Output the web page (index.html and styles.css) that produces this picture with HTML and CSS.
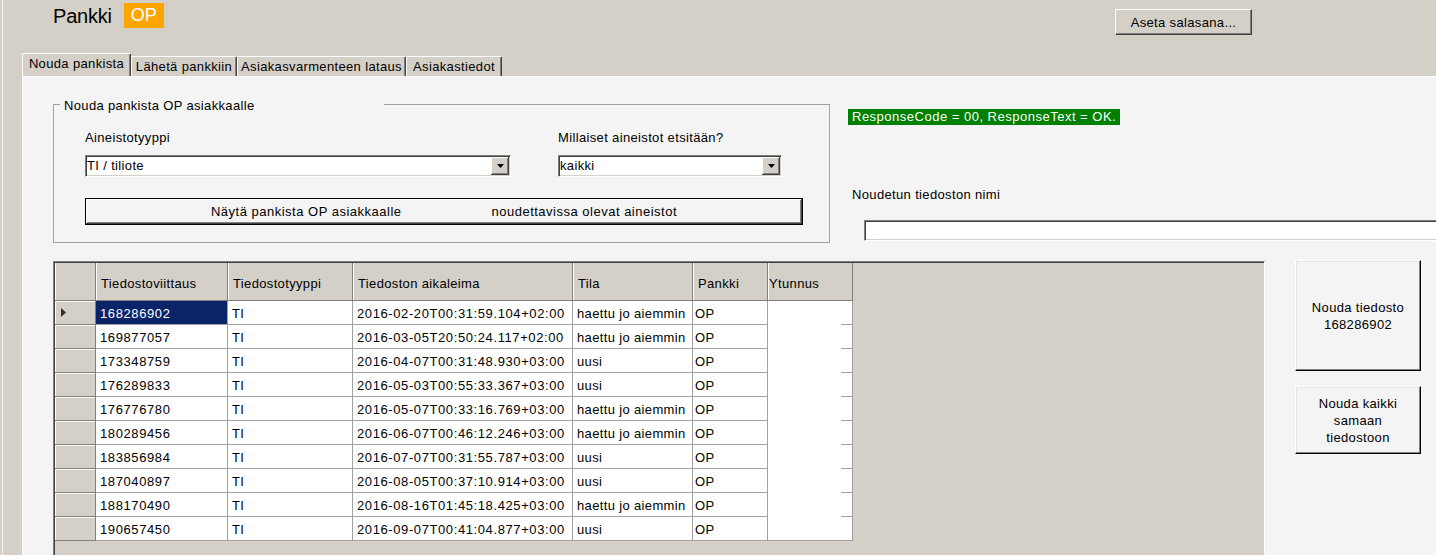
FILE: index.html
```html
<!DOCTYPE html>
<html lang="fi">
<head>
<meta charset="utf-8">
<title>Pankki OP</title>
<link rel="stylesheet" href="styles.css">
</head>
<body>
<div class="app">
  <header class="topbar">
    <h1 class="title">Pankki</h1>
    <span class="bank-badge">OP</span>
    <button class="btn3d pw-btn" type="button">Aseta salasana...</button>
  </header>

  <nav class="tabs">
    <div class="tab tab-active">Nouda pankista</div>
    <div class="tab">Lähetä pankkiin</div>
    <div class="tab">Asiakasvarmenteen lataus</div>
    <div class="tab">Asiakastiedot</div>
  </nav>

  <main class="panel">
    <div class="top-row">
      <section class="groupbox">
        <span class="groupbox-title">Nouda pankista OP asiakkaalle</span>
        <div class="field-row">
          <div class="field field-type">
            <span class="field-label">Aineistotyyppi</span>
            <div class="combo combo-type">
              <span class="combo-value">TI / tiliote</span>
              <span class="combo-drop"><svg width="7" height="4" viewBox="0 0 7 4"><path d="M0 0H7L3.5 4Z" fill="#000"/></svg></span>
            </div>
          </div>
          <div class="field field-filter">
            <span class="field-label">Millaiset aineistot etsitään?</span>
            <div class="combo combo-filter">
              <span class="combo-value">kaikki</span>
              <span class="combo-drop"><svg width="7" height="4" viewBox="0 0 7 4"><path d="M0 0H7L3.5 4Z" fill="#000"/></svg></span>
            </div>
          </div>
        </div>
        <button class="default-btn" type="button"><span>Näytä pankista OP asiakkaalle</span><span class="btn-part2">noudettavissa olevat aineistot</span></button>
      </section>

      <section class="status">
        <div class="response">ResponseCode = 00, ResponseText = OK.</div>
        <div class="file-label">Noudetun tiedoston nimi</div>
        <div class="file-input"></div>
      </section>
    </div>

    <div class="bottom-row">
      <div class="datagrid">
        <div class="gr gr-head">
          <div class="h"></div>
          <div class="h">Tiedostoviittaus</div>
          <div class="h">Tiedostotyyppi</div>
          <div class="h">Tiedoston aikaleima</div>
          <div class="h">Tila</div>
          <div class="h">Pankki</div>
          <div class="h h-y">Ytunnus</div>
        </div>
        <div class="gr">
          <div class="rh"><svg width="5" height="9" viewBox="0 0 5 9"><path d="M0 0L5 4.5L0 9Z" fill="#303030"/></svg></div>
          <div class="c num sel">168286902</div><div class="c">TI</div><div class="c num">2016-02-20T00:31:59.104+02:00</div><div class="c">haettu jo aiemmin</div><div class="c cp">OP</div><div class="c cy"></div>
        </div>
        <div class="gr">
          <div class="rh"></div>
          <div class="c num">169877057</div><div class="c">TI</div><div class="c num">2016-03-05T20:50:24.117+02:00</div><div class="c">haettu jo aiemmin</div><div class="c cp">OP</div><div class="c cy"></div>
        </div>
        <div class="gr">
          <div class="rh"></div>
          <div class="c num">173348759</div><div class="c">TI</div><div class="c num">2016-04-07T00:31:48.930+03:00</div><div class="c">uusi</div><div class="c cp">OP</div><div class="c cy"></div>
        </div>
        <div class="gr">
          <div class="rh"></div>
          <div class="c num">176289833</div><div class="c">TI</div><div class="c num">2016-05-03T00:55:33.367+03:00</div><div class="c">uusi</div><div class="c cp">OP</div><div class="c cy"></div>
        </div>
        <div class="gr">
          <div class="rh"></div>
          <div class="c num">176776780</div><div class="c">TI</div><div class="c num">2016-05-07T00:33:16.769+03:00</div><div class="c">haettu jo aiemmin</div><div class="c cp">OP</div><div class="c cy"></div>
        </div>
        <div class="gr">
          <div class="rh"></div>
          <div class="c num">180289456</div><div class="c">TI</div><div class="c num">2016-06-07T00:46:12.246+03:00</div><div class="c">haettu jo aiemmin</div><div class="c cp">OP</div><div class="c cy"></div>
        </div>
        <div class="gr">
          <div class="rh"></div>
          <div class="c num">183856984</div><div class="c">TI</div><div class="c num">2016-07-07T00:31:55.787+03:00</div><div class="c">uusi</div><div class="c cp">OP</div><div class="c cy"></div>
        </div>
        <div class="gr">
          <div class="rh"></div>
          <div class="c num">187040897</div><div class="c">TI</div><div class="c num">2016-08-05T00:37:10.914+03:00</div><div class="c">uusi</div><div class="c cp">OP</div><div class="c cy"></div>
        </div>
        <div class="gr">
          <div class="rh"></div>
          <div class="c num">188170490</div><div class="c">TI</div><div class="c num">2016-08-16T01:45:18.425+03:00</div><div class="c">haettu jo aiemmin</div><div class="c cp">OP</div><div class="c cy"></div>
        </div>
        <div class="gr gr-last">
          <div class="rh"></div>
          <div class="c num">190657450</div><div class="c">TI</div><div class="c num">2016-09-07T00:41:04.877+03:00</div><div class="c">uusi</div><div class="c cp">OP</div><div class="c cy"></div>
        </div>
      </div>

      <div class="actions">
        <button class="action-btn action-tall" type="button">Nouda tiedosto<br>168286902</button>
        <button class="action-btn action-short" type="button">Nouda kaikki<br>samaan<br>tiedostoon</button>
      </div>
    </div>
  </main>
</div>
</body>
</html>
```
FILE: styles.css
```css
* { box-sizing: border-box; }

html, body { margin: 0; padding: 0; }

body {
  width: 1436px;
  height: 555px;
  overflow: hidden;
  background: #d4d0c8;
  color: #000;
  font-family: "Liberation Sans", Arial, sans-serif;
  font-size: 13px;
  letter-spacing: 0.35px;
}

button {
  font: inherit;
  letter-spacing: inherit;
  color: #000;
  padding: 0;
  margin: 0;
  cursor: default;
}

.app {
  height: 555px;
  display: flex;
  flex-direction: column;
  box-shadow: inset 2px 0 0 #d4d0c8, inset 3px 0 0 #f2f1ed;
}

/* ---------- top bar ---------- */
.topbar {
  flex: none;
  height: 53px;
  display: flex;
  align-items: flex-start;
  padding-left: 53px;
}

.title {
  margin: 4px 0 0;
  font-size: 20px;
  font-weight: normal;
  line-height: 24px;
  letter-spacing: -0.2px;
}

.bank-badge {
  margin: 3px 0 0 12px;
  height: 25px;
  line-height: 25px;
  padding: 0 7px;
  background: #ffa500;
  color: #fff;
  font-size: 18px;
  letter-spacing: 0;
}

.btn3d {
  background: #d4d0c8;
  border-top: 1px solid #fff;
  border-left: 1px solid #fff;
  border-right: 1px solid #404040;
  border-bottom: 1px solid #404040;
  box-shadow: inset -1px -1px 0 #808080;
}

.pw-btn {
  margin: 9px 184px 0 auto;
  width: 137px;
  height: 26px;
}

/* ---------- tabs ---------- */
.tabs {
  flex: none;
  height: 23px;
  display: flex;
  align-items: flex-end;
  padding-left: 22px;
}

.tab {
  height: 20px;
  line-height: 19px;
  text-align: center;
  white-space: nowrap;
  background: #d4d0c8;
  border-top: 1px solid #fff;
  border-left: 1px solid #fff;
  border-right: 1px solid #404040;
  box-shadow: inset -1px 0 0 #808080;
  border-radius: 2px 2px 0 0;
}

.tab:nth-child(1) { width: 109px; }
.tab:nth-child(2) { width: 106px; }
.tab:nth-child(3) { width: 169px; }
.tab:nth-child(4) { width: 96px; }

.tab-active {
  height: 23px;
}

/* ---------- panel ---------- */
.panel {
  flex: 1;
  min-height: 0;
  margin-left: 22px;
  background: #f4f4f4;
  border-top: 1px solid #fff;
  border-left: 1px solid #fff;
  padding-left: 30px;
}

.top-row {
  display: flex;
  align-items: flex-start;
}

.groupbox {
  position: relative;
  flex: none;
  width: 777px;
  height: 139px;
  margin-top: 27px;
  border: 1px solid #a0a0a0;
  padding: 25px 0 0 31px;
}

.groupbox-title {
  position: absolute;
  top: -7px;
  left: 6px;
  width: 324px;
  padding-left: 4px;
  line-height: 15px;
  background: #f4f4f4;
}

.field-row {
  display: flex;
}

.field-type { width: 473px; }

.field-label {
  display: block;
  line-height: 15px;
}

.combo {
  margin-top: 10px;
  height: 22px;
  display: flex;
  background: #fff;
  border-top: 1px solid #808080;
  border-left: 1px solid #808080;
  border-right: 1px solid #fff;
  border-bottom: 1px solid #fff;
  box-shadow: inset 1px 1px 0 #404040, inset -1px -1px 0 #d4d0c8;
  padding: 1px;
}

.combo-type { width: 426px; }
.combo-filter { width: 224px; }

.combo-value {
  flex: 1;
  line-height: 18px;
  white-space: nowrap;
}

.combo-drop {
  width: 18px;
  height: 18px;
  display: flex;
  align-items: center;
  justify-content: center;
  background: #d4d0c8;
  box-shadow: inset -1px -1px 0 #404040, inset 1px 1px 0 #fff, inset -2px -2px 0 #808080;
}

.default-btn {
  display: block;
  margin-top: 21px;
  width: 718px;
  height: 27px;
  background: #f4f4f4;
  border: 1px solid #000;
  box-shadow: inset -1px -1px 0 #404040, inset 1px 1px 0 #fff, inset -2px -2px 0 #808080;
  white-space: nowrap;
  letter-spacing: 0.5px;
}

.btn-part2 { margin-left: 90px; }

/* ---------- status column ---------- */
.status {
  flex: 1;
  min-width: 0;
  overflow: hidden;
  margin: 32px 0 0 18px;
}

.response {
  display: inline-block;
  height: 16px;
  line-height: 16px;
  padding: 0 4px;
  background: #008000;
  color: #fff;
  letter-spacing: 0.5px;
  white-space: nowrap;
}

.file-label {
  margin: 62px 0 0 4px;
  line-height: 15px;
}

.file-input {
  margin: 18px 0 0 16px;
  width: 700px;
  height: 21px;
  background: #fff;
  border-top: 1px solid #808080;
  border-left: 1px solid #808080;
  border-right: 1px solid #fff;
  border-bottom: 1px solid #fff;
  box-shadow: inset 1px 1px 0 #404040, inset -1px -1px 0 #d4d0c8;
}

/* ---------- data grid ---------- */
.bottom-row {
  display: flex;
  align-items: flex-start;
  margin-top: 18px;
}

.datagrid {
  flex: none;
  width: 1212px;
  height: 300px;
  overflow: hidden;
  background: #d4d0c8;
  border-top: 1px solid #808080;
  border-left: 1px solid #808080;
  border-right: 1px solid #fff;
  border-bottom: 1px solid #fff;
  box-shadow: inset 1px 1px 0 #404040, inset -1px -1px 0 #d4d0c8;
  padding: 1px;
}

.gr {
  display: grid;
  grid-template-columns: 41px 132px 125px 220px 120px 75px 85px;
  height: 24px;
}

.gr-head { height: 38px; }

.h {
  background: #d4d0c8;
  border-right: 1px solid #808080;
  border-bottom: 1px solid #808080;
  box-shadow: inset 1px 0 0 #fff;
  padding: 5px 0 0 5px;
  line-height: 32px;
  white-space: nowrap;
  overflow: hidden;
}

.h-y { padding-left: 1px; }

.rh {
  background: #d4d0c8;
  border-right: 1px solid #808080;
  border-bottom: 1px solid #808080;
  box-shadow: inset 1px 1px 0 #fff;
  display: flex;
  align-items: center;
  padding-left: 6px;
}

.c {
  background: #fff;
  border-right: 1px solid #a0a0a0;
  border-bottom: 1px solid #a0a0a0;
  padding: 3px 0 0 4px;
  line-height: 20px;
  white-space: nowrap;
  overflow: hidden;
}

.num { letter-spacing: 0.6px; }

.cp { padding-left: 2px; }

.sel {
  background: #0a246a;
  color: #fff;
}

.cy {
  position: relative;
  border-bottom: 0;
}

.cy::after {
  content: "";
  position: absolute;
  right: 0;
  bottom: 0;
  width: 11px;
  height: 1px;
  background: #a0a0a0;
}

.gr-last .cy { border-bottom: 1px solid #a0a0a0; }
.gr-last .cy::after { display: none; }

/* ---------- action buttons ---------- */
.actions {
  flex: none;
  display: flex;
  flex-direction: column;
  gap: 15px;
  margin: -1px 0 0 30px;
}

.action-btn {
  width: 126px;
  line-height: 17px;
  background: #f4f4f4;
  border-top: 1px solid #fff;
  border-left: 1px solid #fff;
  border-right: 1px solid #000;
  border-bottom: 1px solid #000;
  box-shadow: inset -1px -1px 0 #808080, inset 1px 1px 0 #e6e6e6;
  text-align: center;
}

.action-tall { height: 111px; }
.action-short { height: 68px; }
```
